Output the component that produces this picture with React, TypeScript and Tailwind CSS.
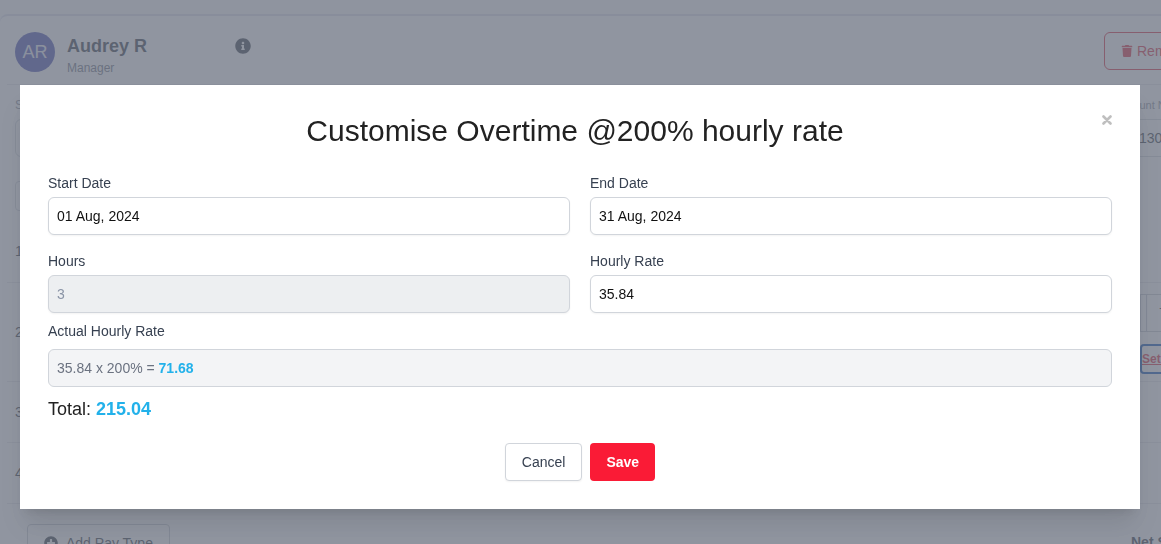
import React from "react";
import { FaInfoCircle, FaPlusCircle, FaTrash } from "react-icons/fa";

const inputClass =
  "block h-[38px] w-full rounded-md border border-[#d1d5db] bg-white px-2 text-sm text-[#111111] shadow-xs disabled:bg-[#edeff1] disabled:text-[#8a94a6]";

function Field({ id, label, value, disabled }: { id: string; label: string; value: string; disabled?: boolean }) {
  return (
    <div>
      <label htmlFor={id} className="mb-1 block text-sm text-[#374151]">
        {label}
      </label>
      <input id={id} type="text" defaultValue={value} disabled={disabled} className={inputClass} />
    </div>
  );
}

function CloseIcon() {
  return (
    <svg viewBox="0 0 10 10" className="size-2.5" fill="none" stroke="currentColor" strokeWidth="2.6" strokeLinecap="round">
      <path d="M1.5 1.5 8.5 8.5M8.5 1.5 1.5 8.5" />
    </svg>
  );
}

function PayrollCard() {
  return (
    <div className="h-full overflow-hidden bg-[#f9fafb] pt-3.5 text-[#333a45]" aria-hidden="true">
      <section className="-mr-24 rounded-lg border-2 border-b-0 border-l-0 border-[#dde0ec] bg-white pl-[7px]">
        <header className="flex h-[69px] items-start border-b border-[#e5e7eb] pt-4 pl-2">
          <div className="flex size-10 items-center justify-center rounded-full bg-[#464eb0] text-lg text-[#e8eaf4]">
            AR
          </div>
          <div className="ml-3 w-[168px]">
            <h2 className="text-lg leading-7 font-bold">Audrey R</h2>
            <p className="text-xs text-[#6b7280]">Manager</p>
          </div>
          <FaInfoCircle className="mt-1.5 size-4" />
          <button
            type="button"
            className="mr-4 ml-auto flex h-[38px] w-[135px] items-center gap-1 rounded-md border border-[#d9283c] pl-4 text-sm text-[#d9283c]"
          >
            <FaTrash className="size-3" />
            Remove
          </button>
        </header>
        <div className="flex justify-between pt-3 pl-2">
          <div>
            <label htmlFor="status" className="mb-1.5 block text-xs leading-4 text-[#8a909c]">
              Status
            </label>
            <input id="status" className="block h-[38px] w-40 rounded-md border border-[#d1d5db]" />
          </div>
          <div>
            <label htmlFor="account" className="mb-1.5 block pl-0.5 text-[11px] leading-4 text-[#8a909c]">
              Account Number
            </label>
            <input
              id="account"
              defaultValue="130"
              className="block h-[38px] w-[142px] border border-[#d1d5db] pl-[25px] text-sm"
            />
          </div>
        </div>
        <button
          type="button"
          aria-label="Filter"
          className="mt-6 ml-2 block h-[30px] w-24 rounded-sm border border-[#d1d5db]"
        />
        <ol className="mt-2 text-sm">
          <li className="flex h-16 items-center border-b border-[#e5e7eb] pl-2">1</li>
          <li className="flex h-[99px] items-center justify-between border-b border-[#e5e7eb] pl-2">
            2
            <div className="w-[115px] pt-1">
              <div className="flex h-[38px] border border-[#c5c9d0]">
                <span className="w-1.5 border-r border-[#c5c9d0]" />
                <input aria-label="Amount" defaultValue="7" className="w-24 pl-3" />
              </div>
              <button
                type="button"
                className="mt-3 block h-[30px] w-24 rounded-sm border-2 border-[#0b52b6] text-left text-xs font-bold text-[#d9283c] underline"
              >
                Set rate
              </button>
            </div>
          </li>
          <li className="flex h-[61px] items-center border-b border-[#e5e7eb] pl-2">3</li>
          <li className="flex h-[61px] items-center border-b border-[#e5e7eb] pl-2">4</li>
        </ol>
        <footer className="flex items-start justify-between pt-5 pl-5">
          <button
            type="button"
            className="flex h-[38px] w-[143px] items-center gap-2 rounded-sm border border-[#c5c9d0] pl-4 text-sm"
          >
            <FaPlusCircle className="size-3.5" />
            Add Pay Type
          </button>
          <p className="w-[124px] pt-2 text-sm font-bold">Net Salary</p>
        </footer>
      </section>
    </div>
  );
}

export default function App() {
  return (
    <div className="h-screen overflow-hidden font-['Liberation_Sans',Arial,sans-serif]">
      <PayrollCard />
      <div className="fixed inset-0 overflow-hidden bg-[#6b7280]/75 pt-[85px] pr-[21px] pl-5">
        <form
          role="dialog"
          aria-modal="true"
          aria-labelledby="dialog-title"
          onSubmit={(e) => e.preventDefault()}
          className="bg-white p-7 shadow-xl"
        >
          <div className="mb-6 flex items-start">
            <h1 id="dialog-title" className="flex-1 text-center text-3xl leading-9 text-[#222222]">
              Customise Overtime @200% hourly rate
            </h1>
            <button type="button" aria-label="Close" className="pt-0.5 text-[#bfbfbf]">
              <CloseIcon />
            </button>
          </div>
          <div className="grid grid-cols-2 gap-x-5 gap-y-4">
            <Field id="start" label="Start Date" value="01 Aug, 2024" />
            <Field id="end" label="End Date" value="31 Aug, 2024" />
            <Field id="hours" label="Hours" value="3" disabled />
            <Field id="rate" label="Hourly Rate" value="35.84" />
          </div>
          <p className="mt-2 text-sm text-[#374151]">Actual Hourly Rate</p>
          <div className="mt-2 flex h-[38px] items-center rounded-md border border-[#d1d5db] bg-[#f3f4f6] px-2 text-sm whitespace-pre text-[#6b7280]">
            35.84 x 200% = <strong className="text-[#22b1ea]">71.68</strong>
          </div>
          <p className="mt-2 text-lg leading-7 text-[#222222]">
            Total: <strong className="text-[#22b1ea]">215.04</strong>
          </p>
          <div className="mt-5 flex justify-center gap-2">
            <button
              type="button"
              className="h-[38px] rounded-sm border border-[#d1d5db] bg-white px-4 text-sm text-[#374151] shadow-xs"
            >
              Cancel
            </button>
            <button type="submit" className="h-[38px] rounded-sm bg-[#fa1b36] px-4 text-sm font-bold text-white">
              Save
            </button>
          </div>
        </form>
      </div>
    </div>
  );
}
